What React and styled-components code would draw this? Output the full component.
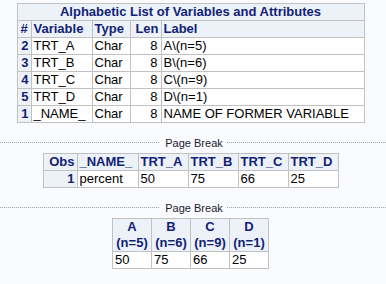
import React from "react";
import styled, { createGlobalStyle } from "styled-components";

const GlobalStyle = createGlobalStyle`
  html, body {
    margin: 0;
    padding: 0;
    background: #fafbfe;
  }
  body {
    font-family: "Liberation Sans", Arial, sans-serif;
  }
`;

const Page = styled.div`
  display: flex;
  flex-direction: column;
  padding-top: 3px;
  width: 386px;
  height: 284px;
  overflow: hidden;
`;

// tables sit slightly left of the window centre
const TableRow = styled.div`
  display: flex;
  justify-content: center;
  padding-right: 5px;
  margin-top: ${(p) => p.$top || 0}px;
`;

const Table = styled.table`
  border-collapse: collapse;
  table-layout: fixed;
  font-size: 13px;
  line-height: 16px;
  color: #000;
`;

const Cell = styled.td`
  border: 1px solid #c1c1c1;
  background: #ffffff;
  padding: 0 3px 0 2px;
  white-space: nowrap;
  overflow: hidden;
  text-align: ${(p) => p.$align || "left"};
`;

const Head = styled.th`
  border: 1px solid #c1c1c1;
  background: #edf2f9;
  color: #112277;
  font-weight: bold;
  padding: 0 2px;
  white-space: nowrap;
  overflow: hidden;
  text-align: ${(p) => p.$align || "left"};
`;

const PageBreak = styled.div`
  display: flex;
  align-items: center;
  height: 19px;
  margin-top: 10px;
  &::before,
  &::after {
    content: "";
    flex: 1;
    border-top: 1px dotted #a0a0a0;
  }
`;

const BreakLabel = styled.span`
  font-size: 11px;
  color: #1a1a2e;
  padding: 0 4px 0 6px;
`;

const attrs = [
  { n: 2, name: "TRT_A", label: "A\\(n=5)" },
  { n: 3, name: "TRT_B", label: "B\\(n=6)" },
  { n: 4, name: "TRT_C", label: "C\\(n=9)" },
  { n: 5, name: "TRT_D", label: "D\\(n=1)" },
  { n: 1, name: "_NAME_", label: "NAME OF FORMER VARIABLE" },
];

const trts = [
  { letter: "A", n: 5, value: 50 },
  { letter: "B", n: 6, value: 75 },
  { letter: "C", n: 9, value: 66 },
  { letter: "D", n: 1, value: 25 },
];

const App = () => {
  return (
    <Page>
      <GlobalStyle />

      <TableRow>
        <Table>
          <colgroup>
            <col style={{ width: 14 }} />
            <col style={{ width: 61 }} />
            <col style={{ width: 38 }} />
            <col style={{ width: 31 }} />
            <col style={{ width: 203 }} />
          </colgroup>
          <thead>
            <tr>
              <Head colSpan={5} $align="center">
                Alphabetic List of Variables and Attributes
              </Head>
            </tr>
            <tr>
              <Head $align="center">#</Head>
              <Head>Variable</Head>
              <Head>Type</Head>
              <Head $align="right">Len</Head>
              <Head>Label</Head>
            </tr>
          </thead>
          <tbody>
            {attrs.map((a) => (
              <tr key={a.name}>
                <Head $align="right">{a.n}</Head>
                <Cell>{a.name}</Cell>
                <Cell>Char</Cell>
                <Cell $align="right">8</Cell>
                <Cell>{a.label}</Cell>
              </tr>
            ))}
          </tbody>
        </Table>
      </TableRow>

      <PageBreak>
        <BreakLabel>Page Break</BreakLabel>
      </PageBreak>

      <TableRow $top={1}>
        <Table>
          <colgroup>
            <col style={{ width: 34 }} />
            <col style={{ width: 61 }} />
            <col style={{ width: 50 }} />
            <col style={{ width: 50 }} />
            <col style={{ width: 50 }} />
            <col style={{ width: 50 }} />
          </colgroup>
          <thead>
            <tr>
              <Head $align="right">Obs</Head>
              <Head>_NAME_</Head>
              {trts.map((t) => (
                <Head key={t.letter}>TRT_{t.letter}</Head>
              ))}
            </tr>
          </thead>
          <tbody>
            <tr>
              <Head $align="right">1</Head>
              <Cell>percent</Cell>
              {trts.map((t) => (
                <Cell key={t.letter}>{t.value}</Cell>
              ))}
            </tr>
          </tbody>
        </Table>
      </TableRow>

      <PageBreak>
        <BreakLabel>Page Break</BreakLabel>
      </PageBreak>

      <TableRow $top={1}>
        <Table>
          <colgroup>
            {trts.map((t) => (
              <col key={t.letter} style={{ width: 39 }} />
            ))}
          </colgroup>
          <thead>
            <tr>
              {trts.map((t) => (
                <Head key={t.letter} $align="center">
                  {t.letter}
                  <br />
                  (n={t.n})
                </Head>
              ))}
            </tr>
          </thead>
          <tbody>
            <tr>
              {trts.map((t) => (
                <Cell key={t.letter}>{t.value}</Cell>
              ))}
            </tr>
          </tbody>
        </Table>
      </TableRow>
    </Page>
  );
};

export default App;
